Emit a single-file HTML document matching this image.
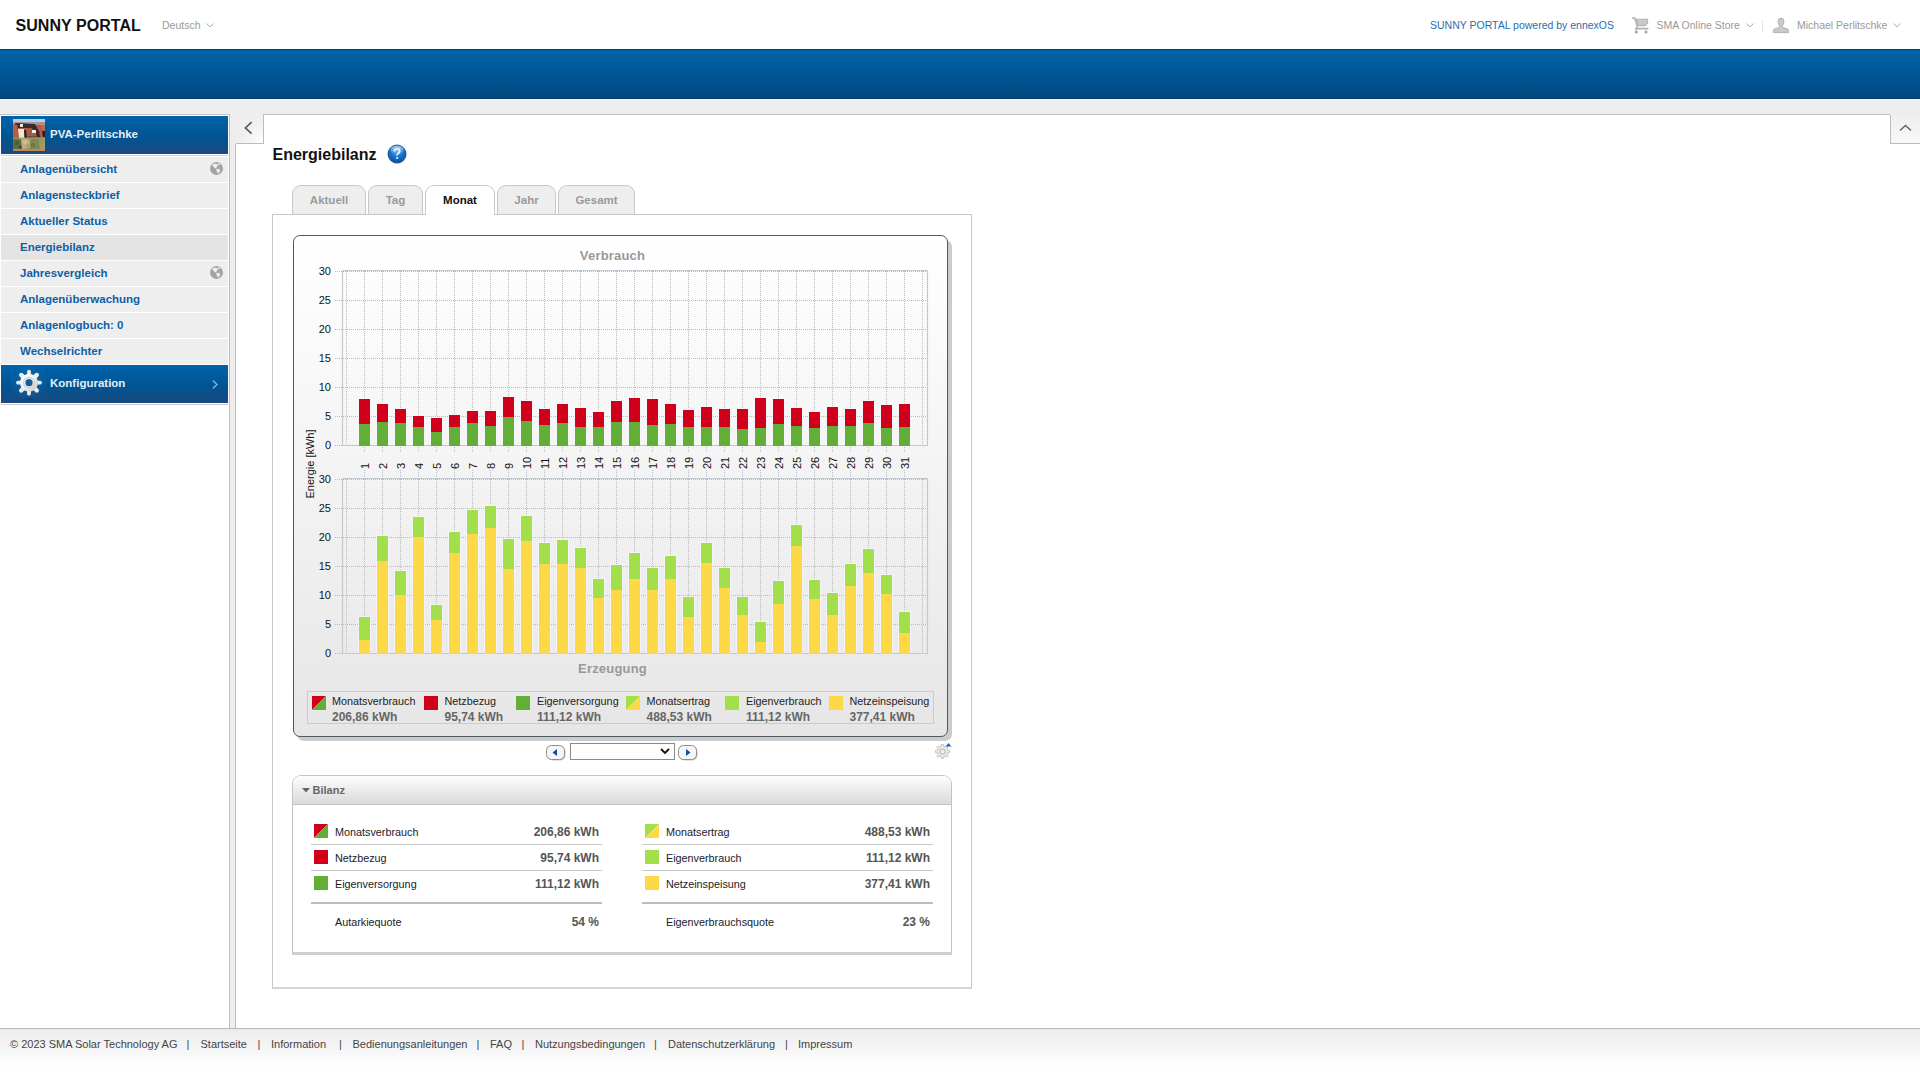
<!DOCTYPE html><html><head><meta charset="utf-8"><style>
html,body{margin:0;padding:0;width:1920px;height:1080px;overflow:hidden;background:#fff;font-family:"Liberation Sans", sans-serif;}
.t{position:absolute;white-space:nowrap;line-height:1;}
div{box-sizing:border-box;}
</style></head><body>
<div class="t" style="left:15.5px;top:18.46px;font-size:16px;color:#111;font-weight:bold;letter-spacing:0.05px;">SUNNY PORTAL</div>
<div class="t" style="left:162px;top:20.11px;font-size:10.5px;color:#999;font-weight:normal;">Deutsch</div>
<svg style="position:absolute;left:206px;top:23px" width="8" height="5" viewBox="0 0 8 5"><path d="M0.5 0.5 L4.0 4 L7.5 0.5" fill="none" stroke="#aaa" stroke-width="1"/></svg>
<div class="t" style="left:1430px;top:20.11px;font-size:10.5px;color:#1f6fb0;font-weight:normal;">SUNNY PORTAL powered by ennexOS</div>
<svg style="position:absolute;left:1628px;top:12px" width="26" height="24" viewBox="0 0 26 24">
<path d="M4 6 H6.8 L9.2 14.2 L8 18.3" fill="none" stroke="#b4b4b4" stroke-width="1.6" stroke-linejoin="round"/>
<path d="M8.2 7.3 H19.6 V11.2 L17.2 13.6 H10 Z" fill="#c9c9c9" stroke="#b4b4b4" stroke-width="1.1" stroke-linejoin="round"/>
<path d="M8 16.7 H19.6" stroke="#b0b0b0" stroke-width="1.8" stroke-linecap="round"/>
<circle cx="8.3" cy="20" r="1.6" fill="#a8a8a8"/><circle cx="18" cy="20" r="1.6" fill="#a8a8a8"/>
</svg>
<div class="t" style="left:1656.5px;top:20.11px;font-size:10.5px;color:#999;font-weight:normal;">SMA Online Store</div>
<svg style="position:absolute;left:1746px;top:23px" width="8" height="5" viewBox="0 0 8 5"><path d="M0.5 0.5 L4.0 4 L7.5 0.5" fill="none" stroke="#aaa" stroke-width="1"/></svg>
<div style="position:absolute;left:1762px;top:20px;width:1px;height:11px;border-left:1px dotted #ccc;"></div>
<svg style="position:absolute;left:1768px;top:12px" width="26" height="24" viewBox="0 0 26 24">
<path d="M5.4 20.6 V18.6 Q5.4 17.1 7.6 16.6 L10.2 15.8 Q11.6 15 11.9 14.1 Q10.2 12.6 10.2 10.2 V8.6 Q10.2 6.3 13 6.3 Q15.8 6.3 15.8 8.6 V10.2 Q15.8 12.6 14.1 14.1 Q14.4 15 15.8 15.8 L18.4 16.6 Q20.6 17.1 20.6 18.6 V20.6 Z" fill="#c9c9c9" stroke="#b2b2b2" stroke-width="1"/>
</svg>
<div class="t" style="left:1797px;top:20.11px;font-size:10.5px;color:#999;font-weight:normal;">Michael Perlitschke</div>
<svg style="position:absolute;left:1893px;top:23px" width="8" height="5" viewBox="0 0 8 5"><path d="M0.5 0.5 L4.0 4 L7.5 0.5" fill="none" stroke="#aaa" stroke-width="1"/></svg>
<div style="position:absolute;left:0px;top:49px;width:1920px;height:50px;background:linear-gradient(#0063aa,#00497f);"></div>
<div style="position:absolute;left:0px;top:49px;width:1920px;height:1px;background:#0a3d68;"></div>
<div style="position:absolute;left:0px;top:98px;width:1920px;height:1px;background:#023a68;"></div>
<div style="position:absolute;left:0px;top:99px;width:1920px;height:929px;background:#eeeeee;"></div>
<div style="position:absolute;left:0px;top:99px;width:1920px;height:1px;background:#f6f6f6;"></div>
<div style="position:absolute;left:0px;top:114px;width:230px;height:914px;background:#fff;border-top:1px solid #c4c4c4;border-right:1px solid #bdbdbd;"></div>
<div style="position:absolute;left:1px;top:116px;width:227px;height:38px;background:linear-gradient(#0063aa 0%,#005494 55%,#1b4a7e 100%);"></div>
<div style="position:absolute;left:1px;top:155px;width:227px;height:1px;background:#cfcfcf;"></div>
<svg style="position:absolute;left:13px;top:119px" width="32" height="32" viewBox="0 0 32 32">
<defs><filter id="pb" x="-10%" y="-10%" width="120%" height="120%"><feGaussianBlur stdDeviation="0.55"/></filter>
<clipPath id="pc"><rect width="32" height="32"/></clipPath></defs>
<g clip-path="url(#pc)"><g filter="url(#pb)">
<rect x="-2" y="-2" width="36" height="36" fill="#ad6048"/>
<rect x="-2" y="-2" width="36" height="5.5" fill="#a9d3ee"/>
<path d="M-2 3.5 L34 4.5 L34 6 L-2 5Z" fill="#c89a80"/>
<path d="M28 6 L34 6 L34 20 L30 20Z" fill="#b86a4c"/>
<path d="M2 4 L4 4 L5 11 L3 11Z" fill="#5a2a22"/>
<path d="M4 4 L22 5 L27 14 L22 15 L18 9 L12 9 L5 9Z" fill="#3a2a2c"/>
<path d="M7 5 L10 5 L10 8 L7 8Z" fill="#e8e4e2"/>
<path d="M14 7 L16 7 L16 9 L14 9Z" fill="#2c3550"/>
<path d="M5 10 L11 10 L11 19 L6 19Z" fill="#ebe5dc"/>
<path d="M11 11 L13 11 L14 19 L12 20Z" fill="#2a1c22"/>
<path d="M13 10 L18 9 L27 17 L24 19 L15 19Z" fill="#a95a40"/>
<path d="M19 11 L23 11 L23 14 L19 14Z" fill="#f2ece6"/>
<path d="M23 14 L26 14 L28 19 L24 19Z" fill="#3b2a2a"/>
<path d="M29 12 L32 12 L33 19 L30 19Z" fill="#2f1e1e"/>
<path d="M0 6 L4 6 L6 20 L0 20Z" fill="#b8603e"/>
<path d="M15 17 L24 17 L25 19 L15 20Z" fill="#5d5048"/>
<path d="M-2 19 L34 18 L34 34 L-2 34Z" fill="#9c9262"/>
<path d="M-2 21 Q3 19 8 21 L10 30 L-2 31Z" fill="#5f6d40"/>
<path d="M8 20 Q13 18 17 21 L17 29 L9 30Z" fill="#bcae80"/>
<path d="M17 21 Q22 19 26 21 L27 30 L17 30Z" fill="#7f8850"/>
<path d="M26 21 L34 20 L34 30 L27 30Z" fill="#a49a68"/>
<circle cx="4" cy="24" r="2" fill="#4d5a34"/><circle cx="12" cy="23" r="2.2" fill="#d0c090"/><circle cx="20" cy="26" r="2" fill="#6a7444"/><circle cx="28" cy="23" r="2" fill="#8f9a60"/><circle cx="15" cy="27" r="1.8" fill="#a89870"/><circle cx="7" cy="28" r="1.6" fill="#3f4a2c"/>
<rect x="-2" y="30" width="36" height="5" fill="#b98a62"/>
</g></g></svg>
<div class="t" style="left:50px;top:129.27px;font-size:11.5px;color:#e4eef8;font-weight:bold;">PVA-Perlitschke</div>
<div style="position:absolute;left:1px;top:157px;width:227px;height:25px;background:#eeeeee;"></div>
<div class="t" style="left:20px;top:164.27px;font-size:11.5px;color:#0e5fa6;font-weight:bold;">Anlagenübersicht</div>
<svg style="position:absolute;left:210px;top:162px" width="13" height="13" viewBox="0 0 13 13">
<circle cx="6.5" cy="6.5" r="6.5" fill="#a4a4a4"/>
<path d="M2.3 2.6 Q5 1.2 7.8 2.4 L7.6 3.8 L5.6 6.4 L4.2 5.4 L2.6 3.8Z M7.6 1.2 L9.6 1.7 L10.2 3 L8.4 3.1Z M6.1 6.9 L8.8 6.8 L10.3 8.4 L8.3 11.8 L7.1 10.2Z" fill="#f0f0f0"/></svg>
<div style="position:absolute;left:1px;top:183px;width:227px;height:25px;background:#eeeeee;"></div>
<div class="t" style="left:20px;top:190.27px;font-size:11.5px;color:#0e5fa6;font-weight:bold;">Anlagensteckbrief</div>
<div style="position:absolute;left:1px;top:209px;width:227px;height:25px;background:#eeeeee;"></div>
<div class="t" style="left:20px;top:216.27px;font-size:11.5px;color:#0e5fa6;font-weight:bold;">Aktueller Status</div>
<div style="position:absolute;left:1px;top:235px;width:227px;height:25px;background:#e4e4e4;"></div>
<div class="t" style="left:20px;top:242.27px;font-size:11.5px;color:#0e5fa6;font-weight:bold;">Energiebilanz</div>
<div style="position:absolute;left:1px;top:261px;width:227px;height:25px;background:#eeeeee;"></div>
<div class="t" style="left:20px;top:268.27px;font-size:11.5px;color:#0e5fa6;font-weight:bold;">Jahresvergleich</div>
<svg style="position:absolute;left:210px;top:266px" width="13" height="13" viewBox="0 0 13 13">
<circle cx="6.5" cy="6.5" r="6.5" fill="#a4a4a4"/>
<path d="M2.3 2.6 Q5 1.2 7.8 2.4 L7.6 3.8 L5.6 6.4 L4.2 5.4 L2.6 3.8Z M7.6 1.2 L9.6 1.7 L10.2 3 L8.4 3.1Z M6.1 6.9 L8.8 6.8 L10.3 8.4 L8.3 11.8 L7.1 10.2Z" fill="#f0f0f0"/></svg>
<div style="position:absolute;left:1px;top:287px;width:227px;height:25px;background:#eeeeee;"></div>
<div class="t" style="left:20px;top:294.27px;font-size:11.5px;color:#0e5fa6;font-weight:bold;">Anlagenüberwachung</div>
<div style="position:absolute;left:1px;top:313px;width:227px;height:25px;background:#eeeeee;"></div>
<div class="t" style="left:20px;top:320.27px;font-size:11.5px;color:#0e5fa6;font-weight:bold;">Anlagenlogbuch: 0</div>
<div style="position:absolute;left:1px;top:339px;width:227px;height:25px;background:#eeeeee;"></div>
<div class="t" style="left:20px;top:346.27px;font-size:11.5px;color:#0e5fa6;font-weight:bold;">Wechselrichter</div>
<div style="position:absolute;left:1px;top:365px;width:227px;height:38px;background:linear-gradient(#0063aa 0%,#005494 55%,#1b4a7e 100%);"></div>
<div style="position:absolute;left:1px;top:404px;width:227px;height:1px;background:#cccccc;"></div>
<svg style="position:absolute;left:8px;top:365px" width="42" height="38" viewBox="0 0 42 38">
<defs><radialGradient id="gl" cx="50%" cy="50%" r="50%"><stop offset="0" stop-color="#3a8ad0" stop-opacity="0.35"/><stop offset="1" stop-color="#3a8ad0" stop-opacity="0"/></radialGradient>
<radialGradient id="gsh" cx="50%" cy="50%" r="50%"><stop offset="0" stop-color="#0a2a50" stop-opacity="0.55"/><stop offset="1" stop-color="#0a2a50" stop-opacity="0"/></radialGradient>
<linearGradient id="gm" x1="0" y1="0" x2="1" y2="1"><stop offset="0" stop-color="#ffffff"/><stop offset="0.5" stop-color="#f0f0f0"/><stop offset="1" stop-color="#c4c4c4"/></linearGradient></defs>
<ellipse cx="21" cy="18" rx="20" ry="17" fill="url(#gl)"/>
<ellipse cx="21" cy="34" rx="7" ry="1.6" fill="url(#gsh)"/>
<g transform="translate(21 17.7)">
<g stroke="url(#gm)" stroke-width="4.2" stroke-linecap="round"><line x1="0" y1="0" x2="0.00" y2="-11.00"/><line x1="0" y1="0" x2="7.78" y2="-7.78"/><line x1="0" y1="0" x2="11.00" y2="0.00"/><line x1="0" y1="0" x2="7.78" y2="7.78"/><line x1="0" y1="0" x2="0.00" y2="11.00"/><line x1="0" y1="0" x2="-7.78" y2="7.78"/><line x1="0" y1="0" x2="-11.00" y2="0.00"/><line x1="0" y1="0" x2="-7.78" y2="-7.78"/></g>
<g stroke="#ececec" stroke-width="3.8" stroke-linecap="round"><line x1="0" y1="0" x2="0.00" y2="-11.00"/><line x1="0" y1="0" x2="7.78" y2="-7.78"/><line x1="0" y1="0" x2="11.00" y2="0.00"/><line x1="0" y1="0" x2="7.78" y2="7.78"/><line x1="0" y1="0" x2="0.00" y2="11.00"/><line x1="0" y1="0" x2="-7.78" y2="7.78"/><line x1="0" y1="0" x2="-11.00" y2="0.00"/><line x1="0" y1="0" x2="-7.78" y2="-7.78"/></g>
<circle r="9" fill="url(#gm)"/>
<circle r="5.4" fill="none" stroke="#d0d0d0" stroke-width="1.2"/>
<circle r="3.6" fill="#14609f"/>
</g></svg>
<div class="t" style="left:50px;top:378.27px;font-size:11.5px;color:#e4eef8;font-weight:bold;">Konfiguration</div>
<svg style="position:absolute;left:212px;top:380px" width="6" height="9" viewBox="0 0 6 9"><path d="M0.8 0.5 L5 4.5 L0.8 8.5" fill="none" stroke="#8fb4d8" stroke-width="1.3"/></svg>
<div style="position:absolute;left:235px;top:114px;width:1685px;height:914px;background:#fff;border-left:1px solid #bdbdbd;border-top:1px solid #bdbdbd;"></div>
<div style="position:absolute;left:235px;top:114px;width:29px;height:30px;background:#eeeeee;"></div>
<div style="position:absolute;left:236px;top:114px;width:28px;height:30px;background:radial-gradient(circle at 100% 100%, #fdfdfd 0%, #efefef 60%);border-right:1px solid #bdbdbd;border-bottom:1px solid #bdbdbd;"></div>
<svg style="position:absolute;left:244px;top:121px" width="9" height="14" viewBox="0 0 9 14"><path d="M7.6 1.1 L1.4 7 L7.6 12.7" fill="none" stroke="#5e5e5e" stroke-width="1.7"/></svg>
<div style="position:absolute;left:1890px;top:114px;width:30px;height:30px;background:#eeeeee;"></div>
<div style="position:absolute;left:1890px;top:115px;width:30px;height:29px;background:linear-gradient(#eeeeee,#f8f8f8);border-left:1px solid #bdbdbd;border-bottom:1px solid #bdbdbd;"></div>
<svg style="position:absolute;left:1899px;top:124px" width="13" height="8" viewBox="0 0 13 8"><path d="M1 6.5 L6.5 1.5 L12 6.5" fill="none" stroke="#666" stroke-width="1.6"/></svg>
<div class="t" style="left:272.5px;top:147.46px;font-size:16px;color:#111;font-weight:bold;">Energiebilanz</div>
<svg style="position:absolute;left:386px;top:143px" width="22" height="22" viewBox="0 0 22 22">
<defs><radialGradient id="hg" cx="50%" cy="30%" r="70%"><stop offset="0" stop-color="#5aaef0"/><stop offset="0.55" stop-color="#1a73c8"/><stop offset="1" stop-color="#0a4a98"/></radialGradient>
<linearGradient id="hl" x1="0" y1="0" x2="0" y2="1"><stop offset="0" stop-color="#fff" stop-opacity="0.55"/><stop offset="1" stop-color="#fff" stop-opacity="0"/></linearGradient></defs>
<ellipse cx="11.5" cy="12.2" rx="9" ry="9" fill="#000" opacity="0.12"/>
<circle cx="11" cy="11" r="9" fill="url(#hg)" stroke="#0d4f9a" stroke-width="0.9"/>
<ellipse cx="11" cy="7" rx="6.5" ry="4.2" fill="url(#hl)"/>
<path d="M8.3 8.6 Q8.3 5.8 11 5.8 Q13.7 5.8 13.7 8.2 Q13.7 9.6 12 10.5 Q11.1 11 11.1 12.4" fill="none" stroke="#f0f6ff" stroke-width="1.6"/>
<circle cx="11.1" cy="15" r="1.1" fill="#f0f6ff"/></svg>
<div style="position:absolute;left:272px;top:214px;width:700px;height:775px;background:#fff;border:1px solid #c8c8c8;border-bottom:2px solid #d4d4d4;"></div>
<div style="position:absolute;left:292px;top:185px;width:74px;height:29px;background:#eeeeee;border:1px solid #c8c8c8;border-bottom:none;border-radius:9px 9px 0 0;"></div>
<div class="t" style="left:129.0px;width:400px;text-align:center;top:194.77px;font-size:11.5px;color:#9a9a9a;font-weight:bold;">Aktuell</div>
<div style="position:absolute;left:368px;top:185px;width:55px;height:29px;background:#eeeeee;border:1px solid #c8c8c8;border-bottom:none;border-radius:9px 9px 0 0;"></div>
<div class="t" style="left:195.5px;width:400px;text-align:center;top:194.77px;font-size:11.5px;color:#9a9a9a;font-weight:bold;">Tag</div>
<div style="position:absolute;left:425px;top:185px;width:70px;height:30px;background:#fff;border:1px solid #c8c8c8;border-bottom:none;border-radius:9px 9px 0 0;"></div>
<div class="t" style="left:260.0px;width:400px;text-align:center;top:194.77px;font-size:11.5px;color:#111;font-weight:bold;">Monat</div>
<div style="position:absolute;left:497px;top:185px;width:59px;height:29px;background:#eeeeee;border:1px solid #c8c8c8;border-bottom:none;border-radius:9px 9px 0 0;"></div>
<div class="t" style="left:326.5px;width:400px;text-align:center;top:194.77px;font-size:11.5px;color:#9a9a9a;font-weight:bold;">Jahr</div>
<div style="position:absolute;left:558px;top:185px;width:77px;height:29px;background:#eeeeee;border:1px solid #c8c8c8;border-bottom:none;border-radius:9px 9px 0 0;"></div>
<div class="t" style="left:396.5px;width:400px;text-align:center;top:194.77px;font-size:11.5px;color:#9a9a9a;font-weight:bold;">Gesamt</div>
<div style="position:absolute;left:297px;top:240px;width:655px;height:501px;background:#cbcbcb;border-radius:7px;"></div>
<div style="position:absolute;left:293px;top:235px;width:655px;height:502px;background:linear-gradient(#ffffff 0%,#f4f4f4 45%,#e6e6e6 100%);border:1.5px solid #4e5963;border-radius:7px;"></div>
<div class="t" style="left:412.5px;width:400px;text-align:center;top:249.00px;font-size:13px;color:#999;font-weight:bold;letter-spacing:0.2px;">Verbrauch</div>
<div class="t" style="left:412.5px;width:400px;text-align:center;top:662.00px;font-size:13px;color:#999;font-weight:bold;letter-spacing:0.2px;">Erzeugung</div>
<svg style="position:absolute;left:0;top:0" width="1920" height="1080" viewBox="0 0 1920 1080">
<line x1="335" y1="445.5" x2="927" y2="445.5" stroke="#b4bcc4" stroke-width="1" stroke-dasharray="1 1"/>
<line x1="335" y1="416.5" x2="927" y2="416.5" stroke="#b4bcc4" stroke-width="1" stroke-dasharray="1 1"/>
<line x1="335" y1="387.5" x2="927" y2="387.5" stroke="#b4bcc4" stroke-width="1" stroke-dasharray="1 1"/>
<line x1="335" y1="358.5" x2="927" y2="358.5" stroke="#b4bcc4" stroke-width="1" stroke-dasharray="1 1"/>
<line x1="335" y1="329.5" x2="927" y2="329.5" stroke="#b4bcc4" stroke-width="1" stroke-dasharray="1 1"/>
<line x1="335" y1="300.5" x2="927" y2="300.5" stroke="#b4bcc4" stroke-width="1" stroke-dasharray="1 1"/>
<line x1="335" y1="271.5" x2="927" y2="271.5" stroke="#b4bcc4" stroke-width="1" stroke-dasharray="1 1"/>
<line x1="346.5" y1="271" x2="346.5" y2="445" stroke="#b4bcc4" stroke-width="1" stroke-dasharray="1 1"/>
<line x1="364.5" y1="271" x2="364.5" y2="445" stroke="#b4bcc4" stroke-width="1" stroke-dasharray="1 1"/>
<line x1="382.5" y1="271" x2="382.5" y2="445" stroke="#b4bcc4" stroke-width="1" stroke-dasharray="1 1"/>
<line x1="400.5" y1="271" x2="400.5" y2="445" stroke="#b4bcc4" stroke-width="1" stroke-dasharray="1 1"/>
<line x1="418.5" y1="271" x2="418.5" y2="445" stroke="#b4bcc4" stroke-width="1" stroke-dasharray="1 1"/>
<line x1="436.5" y1="271" x2="436.5" y2="445" stroke="#b4bcc4" stroke-width="1" stroke-dasharray="1 1"/>
<line x1="454.5" y1="271" x2="454.5" y2="445" stroke="#b4bcc4" stroke-width="1" stroke-dasharray="1 1"/>
<line x1="472.5" y1="271" x2="472.5" y2="445" stroke="#b4bcc4" stroke-width="1" stroke-dasharray="1 1"/>
<line x1="490.5" y1="271" x2="490.5" y2="445" stroke="#b4bcc4" stroke-width="1" stroke-dasharray="1 1"/>
<line x1="508.5" y1="271" x2="508.5" y2="445" stroke="#b4bcc4" stroke-width="1" stroke-dasharray="1 1"/>
<line x1="526.5" y1="271" x2="526.5" y2="445" stroke="#b4bcc4" stroke-width="1" stroke-dasharray="1 1"/>
<line x1="544.5" y1="271" x2="544.5" y2="445" stroke="#b4bcc4" stroke-width="1" stroke-dasharray="1 1"/>
<line x1="562.5" y1="271" x2="562.5" y2="445" stroke="#b4bcc4" stroke-width="1" stroke-dasharray="1 1"/>
<line x1="580.5" y1="271" x2="580.5" y2="445" stroke="#b4bcc4" stroke-width="1" stroke-dasharray="1 1"/>
<line x1="598.5" y1="271" x2="598.5" y2="445" stroke="#b4bcc4" stroke-width="1" stroke-dasharray="1 1"/>
<line x1="616.5" y1="271" x2="616.5" y2="445" stroke="#b4bcc4" stroke-width="1" stroke-dasharray="1 1"/>
<line x1="634.5" y1="271" x2="634.5" y2="445" stroke="#b4bcc4" stroke-width="1" stroke-dasharray="1 1"/>
<line x1="652.5" y1="271" x2="652.5" y2="445" stroke="#b4bcc4" stroke-width="1" stroke-dasharray="1 1"/>
<line x1="670.5" y1="271" x2="670.5" y2="445" stroke="#b4bcc4" stroke-width="1" stroke-dasharray="1 1"/>
<line x1="688.5" y1="271" x2="688.5" y2="445" stroke="#b4bcc4" stroke-width="1" stroke-dasharray="1 1"/>
<line x1="706.5" y1="271" x2="706.5" y2="445" stroke="#b4bcc4" stroke-width="1" stroke-dasharray="1 1"/>
<line x1="724.5" y1="271" x2="724.5" y2="445" stroke="#b4bcc4" stroke-width="1" stroke-dasharray="1 1"/>
<line x1="742.5" y1="271" x2="742.5" y2="445" stroke="#b4bcc4" stroke-width="1" stroke-dasharray="1 1"/>
<line x1="760.5" y1="271" x2="760.5" y2="445" stroke="#b4bcc4" stroke-width="1" stroke-dasharray="1 1"/>
<line x1="778.5" y1="271" x2="778.5" y2="445" stroke="#b4bcc4" stroke-width="1" stroke-dasharray="1 1"/>
<line x1="796.5" y1="271" x2="796.5" y2="445" stroke="#b4bcc4" stroke-width="1" stroke-dasharray="1 1"/>
<line x1="814.5" y1="271" x2="814.5" y2="445" stroke="#b4bcc4" stroke-width="1" stroke-dasharray="1 1"/>
<line x1="832.5" y1="271" x2="832.5" y2="445" stroke="#b4bcc4" stroke-width="1" stroke-dasharray="1 1"/>
<line x1="850.5" y1="271" x2="850.5" y2="445" stroke="#b4bcc4" stroke-width="1" stroke-dasharray="1 1"/>
<line x1="868.5" y1="271" x2="868.5" y2="445" stroke="#b4bcc4" stroke-width="1" stroke-dasharray="1 1"/>
<line x1="886.5" y1="271" x2="886.5" y2="445" stroke="#b4bcc4" stroke-width="1" stroke-dasharray="1 1"/>
<line x1="904.5" y1="271" x2="904.5" y2="445" stroke="#b4bcc4" stroke-width="1" stroke-dasharray="1 1"/>
<line x1="922.5" y1="271" x2="922.5" y2="445" stroke="#b4bcc4" stroke-width="1" stroke-dasharray="1 1"/>
<rect x="358.0" y="398" width="13" height="47" fill="#f6f6ff" opacity="0.6"/>
<rect x="376.0" y="403" width="13" height="42" fill="#f6f6ff" opacity="0.6"/>
<rect x="394.0" y="408" width="13" height="37" fill="#f6f6ff" opacity="0.6"/>
<rect x="412.0" y="415" width="13" height="30" fill="#f6f6ff" opacity="0.6"/>
<rect x="430.0" y="417" width="13" height="28" fill="#f6f6ff" opacity="0.6"/>
<rect x="448.0" y="414" width="13" height="31" fill="#f6f6ff" opacity="0.6"/>
<rect x="466.0" y="410" width="13" height="35" fill="#f6f6ff" opacity="0.6"/>
<rect x="484.0" y="410" width="13" height="35" fill="#f6f6ff" opacity="0.6"/>
<rect x="502.0" y="396" width="13" height="49" fill="#f6f6ff" opacity="0.6"/>
<rect x="520.0" y="400" width="13" height="45" fill="#f6f6ff" opacity="0.6"/>
<rect x="538.0" y="408" width="13" height="37" fill="#f6f6ff" opacity="0.6"/>
<rect x="556.0" y="403" width="13" height="42" fill="#f6f6ff" opacity="0.6"/>
<rect x="574.0" y="407" width="13" height="38" fill="#f6f6ff" opacity="0.6"/>
<rect x="592.0" y="411" width="13" height="34" fill="#f6f6ff" opacity="0.6"/>
<rect x="610.0" y="400" width="13" height="45" fill="#f6f6ff" opacity="0.6"/>
<rect x="628.0" y="397" width="13" height="48" fill="#f6f6ff" opacity="0.6"/>
<rect x="646.0" y="398" width="13" height="47" fill="#f6f6ff" opacity="0.6"/>
<rect x="664.0" y="403" width="13" height="42" fill="#f6f6ff" opacity="0.6"/>
<rect x="682.0" y="409" width="13" height="36" fill="#f6f6ff" opacity="0.6"/>
<rect x="700.0" y="406" width="13" height="39" fill="#f6f6ff" opacity="0.6"/>
<rect x="718.0" y="408" width="13" height="37" fill="#f6f6ff" opacity="0.6"/>
<rect x="736.0" y="408" width="13" height="37" fill="#f6f6ff" opacity="0.6"/>
<rect x="754.0" y="397" width="13" height="48" fill="#f6f6ff" opacity="0.6"/>
<rect x="772.0" y="398" width="13" height="47" fill="#f6f6ff" opacity="0.6"/>
<rect x="790.0" y="407" width="13" height="38" fill="#f6f6ff" opacity="0.6"/>
<rect x="808.0" y="411" width="13" height="34" fill="#f6f6ff" opacity="0.6"/>
<rect x="826.0" y="406" width="13" height="39" fill="#f6f6ff" opacity="0.6"/>
<rect x="844.0" y="408" width="13" height="37" fill="#f6f6ff" opacity="0.6"/>
<rect x="862.0" y="400" width="13" height="45" fill="#f6f6ff" opacity="0.6"/>
<rect x="880.0" y="404" width="13" height="41" fill="#f6f6ff" opacity="0.6"/>
<rect x="898.0" y="403" width="13" height="42" fill="#f6f6ff" opacity="0.6"/>
<path d="M342.5 270.5 H927.5 V445.5 H342.5 Z" fill="none" stroke="#c2c9d0" stroke-width="1.2"/>
<rect x="359.0" y="399" width="11" height="25" fill="#d1001a"/>
<rect x="359.0" y="424" width="11" height="22" fill="#63ae37"/>
<rect x="377.0" y="404" width="11" height="18" fill="#d1001a"/>
<rect x="377.0" y="422" width="11" height="24" fill="#63ae37"/>
<rect x="395.0" y="409" width="11" height="14" fill="#d1001a"/>
<rect x="395.0" y="423" width="11" height="23" fill="#63ae37"/>
<rect x="413.0" y="416" width="11" height="11" fill="#d1001a"/>
<rect x="413.0" y="427" width="11" height="19" fill="#63ae37"/>
<rect x="431.0" y="418" width="11" height="14" fill="#d1001a"/>
<rect x="431.0" y="432" width="11" height="14" fill="#63ae37"/>
<rect x="449.0" y="415" width="11" height="12" fill="#d1001a"/>
<rect x="449.0" y="427" width="11" height="19" fill="#63ae37"/>
<rect x="467.0" y="411" width="11" height="12" fill="#d1001a"/>
<rect x="467.0" y="423" width="11" height="23" fill="#63ae37"/>
<rect x="485.0" y="411" width="11" height="15" fill="#d1001a"/>
<rect x="485.0" y="426" width="11" height="20" fill="#63ae37"/>
<rect x="503.0" y="397" width="11" height="20" fill="#d1001a"/>
<rect x="503.0" y="417" width="11" height="29" fill="#63ae37"/>
<rect x="521.0" y="401" width="11" height="20" fill="#d1001a"/>
<rect x="521.0" y="421" width="11" height="25" fill="#63ae37"/>
<rect x="539.0" y="409" width="11" height="16" fill="#d1001a"/>
<rect x="539.0" y="425" width="11" height="21" fill="#63ae37"/>
<rect x="557.0" y="404" width="11" height="19" fill="#d1001a"/>
<rect x="557.0" y="423" width="11" height="23" fill="#63ae37"/>
<rect x="575.0" y="408" width="11" height="19" fill="#d1001a"/>
<rect x="575.0" y="427" width="11" height="19" fill="#63ae37"/>
<rect x="593.0" y="412" width="11" height="15" fill="#d1001a"/>
<rect x="593.0" y="427" width="11" height="19" fill="#63ae37"/>
<rect x="611.0" y="401" width="11" height="21" fill="#d1001a"/>
<rect x="611.0" y="422" width="11" height="24" fill="#63ae37"/>
<rect x="629.0" y="398" width="11" height="24" fill="#d1001a"/>
<rect x="629.0" y="422" width="11" height="24" fill="#63ae37"/>
<rect x="647.0" y="399" width="11" height="26" fill="#d1001a"/>
<rect x="647.0" y="425" width="11" height="21" fill="#63ae37"/>
<rect x="665.0" y="404" width="11" height="20" fill="#d1001a"/>
<rect x="665.0" y="424" width="11" height="22" fill="#63ae37"/>
<rect x="683.0" y="410" width="11" height="17" fill="#d1001a"/>
<rect x="683.0" y="427" width="11" height="19" fill="#63ae37"/>
<rect x="701.0" y="407" width="11" height="20" fill="#d1001a"/>
<rect x="701.0" y="427" width="11" height="19" fill="#63ae37"/>
<rect x="719.0" y="409" width="11" height="18" fill="#d1001a"/>
<rect x="719.0" y="427" width="11" height="19" fill="#63ae37"/>
<rect x="737.0" y="409" width="11" height="20" fill="#d1001a"/>
<rect x="737.0" y="429" width="11" height="17" fill="#63ae37"/>
<rect x="755.0" y="398" width="11" height="30" fill="#d1001a"/>
<rect x="755.0" y="428" width="11" height="18" fill="#63ae37"/>
<rect x="773.0" y="399" width="11" height="25" fill="#d1001a"/>
<rect x="773.0" y="424" width="11" height="22" fill="#63ae37"/>
<rect x="791.0" y="408" width="11" height="18" fill="#d1001a"/>
<rect x="791.0" y="426" width="11" height="20" fill="#63ae37"/>
<rect x="809.0" y="412" width="11" height="16" fill="#d1001a"/>
<rect x="809.0" y="428" width="11" height="18" fill="#63ae37"/>
<rect x="827.0" y="407" width="11" height="19" fill="#d1001a"/>
<rect x="827.0" y="426" width="11" height="20" fill="#63ae37"/>
<rect x="845.0" y="409" width="11" height="17" fill="#d1001a"/>
<rect x="845.0" y="426" width="11" height="20" fill="#63ae37"/>
<rect x="863.0" y="401" width="11" height="22" fill="#d1001a"/>
<rect x="863.0" y="423" width="11" height="23" fill="#63ae37"/>
<rect x="881.0" y="405" width="11" height="23" fill="#d1001a"/>
<rect x="881.0" y="428" width="11" height="18" fill="#63ae37"/>
<rect x="899.0" y="404" width="11" height="23" fill="#d1001a"/>
<rect x="899.0" y="427" width="11" height="19" fill="#63ae37"/>
<line x1="335" y1="653.5" x2="927" y2="653.5" stroke="#b4bcc4" stroke-width="1" stroke-dasharray="1 1"/>
<line x1="335" y1="624.5" x2="927" y2="624.5" stroke="#b4bcc4" stroke-width="1" stroke-dasharray="1 1"/>
<line x1="335" y1="595.5" x2="927" y2="595.5" stroke="#b4bcc4" stroke-width="1" stroke-dasharray="1 1"/>
<line x1="335" y1="566.5" x2="927" y2="566.5" stroke="#b4bcc4" stroke-width="1" stroke-dasharray="1 1"/>
<line x1="335" y1="537.5" x2="927" y2="537.5" stroke="#b4bcc4" stroke-width="1" stroke-dasharray="1 1"/>
<line x1="335" y1="508.5" x2="927" y2="508.5" stroke="#b4bcc4" stroke-width="1" stroke-dasharray="1 1"/>
<line x1="335" y1="479.5" x2="927" y2="479.5" stroke="#b4bcc4" stroke-width="1" stroke-dasharray="1 1"/>
<line x1="346.5" y1="479" x2="346.5" y2="653" stroke="#b4bcc4" stroke-width="1" stroke-dasharray="1 1"/>
<line x1="364.5" y1="479" x2="364.5" y2="653" stroke="#b4bcc4" stroke-width="1" stroke-dasharray="1 1"/>
<line x1="382.5" y1="479" x2="382.5" y2="653" stroke="#b4bcc4" stroke-width="1" stroke-dasharray="1 1"/>
<line x1="400.5" y1="479" x2="400.5" y2="653" stroke="#b4bcc4" stroke-width="1" stroke-dasharray="1 1"/>
<line x1="418.5" y1="479" x2="418.5" y2="653" stroke="#b4bcc4" stroke-width="1" stroke-dasharray="1 1"/>
<line x1="436.5" y1="479" x2="436.5" y2="653" stroke="#b4bcc4" stroke-width="1" stroke-dasharray="1 1"/>
<line x1="454.5" y1="479" x2="454.5" y2="653" stroke="#b4bcc4" stroke-width="1" stroke-dasharray="1 1"/>
<line x1="472.5" y1="479" x2="472.5" y2="653" stroke="#b4bcc4" stroke-width="1" stroke-dasharray="1 1"/>
<line x1="490.5" y1="479" x2="490.5" y2="653" stroke="#b4bcc4" stroke-width="1" stroke-dasharray="1 1"/>
<line x1="508.5" y1="479" x2="508.5" y2="653" stroke="#b4bcc4" stroke-width="1" stroke-dasharray="1 1"/>
<line x1="526.5" y1="479" x2="526.5" y2="653" stroke="#b4bcc4" stroke-width="1" stroke-dasharray="1 1"/>
<line x1="544.5" y1="479" x2="544.5" y2="653" stroke="#b4bcc4" stroke-width="1" stroke-dasharray="1 1"/>
<line x1="562.5" y1="479" x2="562.5" y2="653" stroke="#b4bcc4" stroke-width="1" stroke-dasharray="1 1"/>
<line x1="580.5" y1="479" x2="580.5" y2="653" stroke="#b4bcc4" stroke-width="1" stroke-dasharray="1 1"/>
<line x1="598.5" y1="479" x2="598.5" y2="653" stroke="#b4bcc4" stroke-width="1" stroke-dasharray="1 1"/>
<line x1="616.5" y1="479" x2="616.5" y2="653" stroke="#b4bcc4" stroke-width="1" stroke-dasharray="1 1"/>
<line x1="634.5" y1="479" x2="634.5" y2="653" stroke="#b4bcc4" stroke-width="1" stroke-dasharray="1 1"/>
<line x1="652.5" y1="479" x2="652.5" y2="653" stroke="#b4bcc4" stroke-width="1" stroke-dasharray="1 1"/>
<line x1="670.5" y1="479" x2="670.5" y2="653" stroke="#b4bcc4" stroke-width="1" stroke-dasharray="1 1"/>
<line x1="688.5" y1="479" x2="688.5" y2="653" stroke="#b4bcc4" stroke-width="1" stroke-dasharray="1 1"/>
<line x1="706.5" y1="479" x2="706.5" y2="653" stroke="#b4bcc4" stroke-width="1" stroke-dasharray="1 1"/>
<line x1="724.5" y1="479" x2="724.5" y2="653" stroke="#b4bcc4" stroke-width="1" stroke-dasharray="1 1"/>
<line x1="742.5" y1="479" x2="742.5" y2="653" stroke="#b4bcc4" stroke-width="1" stroke-dasharray="1 1"/>
<line x1="760.5" y1="479" x2="760.5" y2="653" stroke="#b4bcc4" stroke-width="1" stroke-dasharray="1 1"/>
<line x1="778.5" y1="479" x2="778.5" y2="653" stroke="#b4bcc4" stroke-width="1" stroke-dasharray="1 1"/>
<line x1="796.5" y1="479" x2="796.5" y2="653" stroke="#b4bcc4" stroke-width="1" stroke-dasharray="1 1"/>
<line x1="814.5" y1="479" x2="814.5" y2="653" stroke="#b4bcc4" stroke-width="1" stroke-dasharray="1 1"/>
<line x1="832.5" y1="479" x2="832.5" y2="653" stroke="#b4bcc4" stroke-width="1" stroke-dasharray="1 1"/>
<line x1="850.5" y1="479" x2="850.5" y2="653" stroke="#b4bcc4" stroke-width="1" stroke-dasharray="1 1"/>
<line x1="868.5" y1="479" x2="868.5" y2="653" stroke="#b4bcc4" stroke-width="1" stroke-dasharray="1 1"/>
<line x1="886.5" y1="479" x2="886.5" y2="653" stroke="#b4bcc4" stroke-width="1" stroke-dasharray="1 1"/>
<line x1="904.5" y1="479" x2="904.5" y2="653" stroke="#b4bcc4" stroke-width="1" stroke-dasharray="1 1"/>
<line x1="922.5" y1="479" x2="922.5" y2="653" stroke="#b4bcc4" stroke-width="1" stroke-dasharray="1 1"/>
<rect x="358.0" y="616" width="13" height="37" fill="#f6f6ff" opacity="0.6"/>
<rect x="376.0" y="535" width="13" height="118" fill="#f6f6ff" opacity="0.6"/>
<rect x="394.0" y="570" width="13" height="83" fill="#f6f6ff" opacity="0.6"/>
<rect x="412.0" y="516" width="13" height="137" fill="#f6f6ff" opacity="0.6"/>
<rect x="430.0" y="604" width="13" height="49" fill="#f6f6ff" opacity="0.6"/>
<rect x="448.0" y="531" width="13" height="122" fill="#f6f6ff" opacity="0.6"/>
<rect x="466.0" y="509" width="13" height="144" fill="#f6f6ff" opacity="0.6"/>
<rect x="484.0" y="505" width="13" height="148" fill="#f6f6ff" opacity="0.6"/>
<rect x="502.0" y="538" width="13" height="115" fill="#f6f6ff" opacity="0.6"/>
<rect x="520.0" y="515" width="13" height="138" fill="#f6f6ff" opacity="0.6"/>
<rect x="538.0" y="542" width="13" height="111" fill="#f6f6ff" opacity="0.6"/>
<rect x="556.0" y="539" width="13" height="114" fill="#f6f6ff" opacity="0.6"/>
<rect x="574.0" y="547" width="13" height="106" fill="#f6f6ff" opacity="0.6"/>
<rect x="592.0" y="578" width="13" height="75" fill="#f6f6ff" opacity="0.6"/>
<rect x="610.0" y="564" width="13" height="89" fill="#f6f6ff" opacity="0.6"/>
<rect x="628.0" y="552" width="13" height="101" fill="#f6f6ff" opacity="0.6"/>
<rect x="646.0" y="567" width="13" height="86" fill="#f6f6ff" opacity="0.6"/>
<rect x="664.0" y="555" width="13" height="98" fill="#f6f6ff" opacity="0.6"/>
<rect x="682.0" y="596" width="13" height="57" fill="#f6f6ff" opacity="0.6"/>
<rect x="700.0" y="542" width="13" height="111" fill="#f6f6ff" opacity="0.6"/>
<rect x="718.0" y="567" width="13" height="86" fill="#f6f6ff" opacity="0.6"/>
<rect x="736.0" y="596" width="13" height="57" fill="#f6f6ff" opacity="0.6"/>
<rect x="754.0" y="621" width="13" height="32" fill="#f6f6ff" opacity="0.6"/>
<rect x="772.0" y="580" width="13" height="73" fill="#f6f6ff" opacity="0.6"/>
<rect x="790.0" y="524" width="13" height="129" fill="#f6f6ff" opacity="0.6"/>
<rect x="808.0" y="579" width="13" height="74" fill="#f6f6ff" opacity="0.6"/>
<rect x="826.0" y="592" width="13" height="61" fill="#f6f6ff" opacity="0.6"/>
<rect x="844.0" y="563" width="13" height="90" fill="#f6f6ff" opacity="0.6"/>
<rect x="862.0" y="548" width="13" height="105" fill="#f6f6ff" opacity="0.6"/>
<rect x="880.0" y="574" width="13" height="79" fill="#f6f6ff" opacity="0.6"/>
<rect x="898.0" y="611" width="13" height="42" fill="#f6f6ff" opacity="0.6"/>
<path d="M342.5 478.5 H927.5 V653.5 H342.5 Z" fill="none" stroke="#c2c9d0" stroke-width="1.2"/>
<rect x="359.0" y="617" width="11" height="23" fill="#a2df4b"/>
<rect x="359.0" y="640" width="11" height="14" fill="#fdd948"/>
<rect x="377.0" y="536" width="11" height="25" fill="#a2df4b"/>
<rect x="377.0" y="561" width="11" height="93" fill="#fdd948"/>
<rect x="395.0" y="571" width="11" height="24" fill="#a2df4b"/>
<rect x="395.0" y="595" width="11" height="59" fill="#fdd948"/>
<rect x="413.0" y="517" width="11" height="20" fill="#a2df4b"/>
<rect x="413.0" y="537" width="11" height="117" fill="#fdd948"/>
<rect x="431.0" y="605" width="11" height="15" fill="#a2df4b"/>
<rect x="431.0" y="620" width="11" height="34" fill="#fdd948"/>
<rect x="449.0" y="532" width="11" height="21" fill="#a2df4b"/>
<rect x="449.0" y="553" width="11" height="101" fill="#fdd948"/>
<rect x="467.0" y="510" width="11" height="24" fill="#a2df4b"/>
<rect x="467.0" y="534" width="11" height="120" fill="#fdd948"/>
<rect x="485.0" y="506" width="11" height="22" fill="#a2df4b"/>
<rect x="485.0" y="528" width="11" height="126" fill="#fdd948"/>
<rect x="503.0" y="539" width="11" height="30" fill="#a2df4b"/>
<rect x="503.0" y="569" width="11" height="85" fill="#fdd948"/>
<rect x="521.0" y="516" width="11" height="25" fill="#a2df4b"/>
<rect x="521.0" y="541" width="11" height="113" fill="#fdd948"/>
<rect x="539.0" y="543" width="11" height="21" fill="#a2df4b"/>
<rect x="539.0" y="564" width="11" height="90" fill="#fdd948"/>
<rect x="557.0" y="540" width="11" height="24" fill="#a2df4b"/>
<rect x="557.0" y="564" width="11" height="90" fill="#fdd948"/>
<rect x="575.0" y="548" width="11" height="20" fill="#a2df4b"/>
<rect x="575.0" y="568" width="11" height="86" fill="#fdd948"/>
<rect x="593.0" y="579" width="11" height="19" fill="#a2df4b"/>
<rect x="593.0" y="598" width="11" height="56" fill="#fdd948"/>
<rect x="611.0" y="565" width="11" height="25" fill="#a2df4b"/>
<rect x="611.0" y="590" width="11" height="64" fill="#fdd948"/>
<rect x="629.0" y="553" width="11" height="26" fill="#a2df4b"/>
<rect x="629.0" y="579" width="11" height="75" fill="#fdd948"/>
<rect x="647.0" y="568" width="11" height="22" fill="#a2df4b"/>
<rect x="647.0" y="590" width="11" height="64" fill="#fdd948"/>
<rect x="665.0" y="556" width="11" height="23" fill="#a2df4b"/>
<rect x="665.0" y="579" width="11" height="75" fill="#fdd948"/>
<rect x="683.0" y="597" width="11" height="20" fill="#a2df4b"/>
<rect x="683.0" y="617" width="11" height="37" fill="#fdd948"/>
<rect x="701.0" y="543" width="11" height="20" fill="#a2df4b"/>
<rect x="701.0" y="563" width="11" height="91" fill="#fdd948"/>
<rect x="719.0" y="568" width="11" height="20" fill="#a2df4b"/>
<rect x="719.0" y="588" width="11" height="66" fill="#fdd948"/>
<rect x="737.0" y="597" width="11" height="18" fill="#a2df4b"/>
<rect x="737.0" y="615" width="11" height="39" fill="#fdd948"/>
<rect x="755.0" y="622" width="11" height="20" fill="#a2df4b"/>
<rect x="755.0" y="642" width="11" height="12" fill="#fdd948"/>
<rect x="773.0" y="581" width="11" height="23" fill="#a2df4b"/>
<rect x="773.0" y="604" width="11" height="50" fill="#fdd948"/>
<rect x="791.0" y="525" width="11" height="21" fill="#a2df4b"/>
<rect x="791.0" y="546" width="11" height="108" fill="#fdd948"/>
<rect x="809.0" y="580" width="11" height="19" fill="#a2df4b"/>
<rect x="809.0" y="599" width="11" height="55" fill="#fdd948"/>
<rect x="827.0" y="593" width="11" height="22" fill="#a2df4b"/>
<rect x="827.0" y="615" width="11" height="39" fill="#fdd948"/>
<rect x="845.0" y="564" width="11" height="22" fill="#a2df4b"/>
<rect x="845.0" y="586" width="11" height="68" fill="#fdd948"/>
<rect x="863.0" y="549" width="11" height="24" fill="#a2df4b"/>
<rect x="863.0" y="573" width="11" height="81" fill="#fdd948"/>
<rect x="881.0" y="575" width="11" height="19" fill="#a2df4b"/>
<rect x="881.0" y="594" width="11" height="60" fill="#fdd948"/>
<rect x="899.0" y="612" width="11" height="21" fill="#a2df4b"/>
<rect x="899.0" y="633" width="11" height="21" fill="#fdd948"/>
<line x1="364.5" y1="447" x2="364.5" y2="453" stroke="#b4bcc4" stroke-width="1" stroke-dasharray="1 1"/>
<line x1="364.5" y1="470" x2="364.5" y2="478" stroke="#b4bcc4" stroke-width="1" stroke-dasharray="1 1"/>
<line x1="382.5" y1="447" x2="382.5" y2="453" stroke="#b4bcc4" stroke-width="1" stroke-dasharray="1 1"/>
<line x1="382.5" y1="470" x2="382.5" y2="478" stroke="#b4bcc4" stroke-width="1" stroke-dasharray="1 1"/>
<line x1="400.5" y1="447" x2="400.5" y2="453" stroke="#b4bcc4" stroke-width="1" stroke-dasharray="1 1"/>
<line x1="400.5" y1="470" x2="400.5" y2="478" stroke="#b4bcc4" stroke-width="1" stroke-dasharray="1 1"/>
<line x1="418.5" y1="447" x2="418.5" y2="453" stroke="#b4bcc4" stroke-width="1" stroke-dasharray="1 1"/>
<line x1="418.5" y1="470" x2="418.5" y2="478" stroke="#b4bcc4" stroke-width="1" stroke-dasharray="1 1"/>
<line x1="436.5" y1="447" x2="436.5" y2="453" stroke="#b4bcc4" stroke-width="1" stroke-dasharray="1 1"/>
<line x1="436.5" y1="470" x2="436.5" y2="478" stroke="#b4bcc4" stroke-width="1" stroke-dasharray="1 1"/>
<line x1="454.5" y1="447" x2="454.5" y2="453" stroke="#b4bcc4" stroke-width="1" stroke-dasharray="1 1"/>
<line x1="454.5" y1="470" x2="454.5" y2="478" stroke="#b4bcc4" stroke-width="1" stroke-dasharray="1 1"/>
<line x1="472.5" y1="447" x2="472.5" y2="453" stroke="#b4bcc4" stroke-width="1" stroke-dasharray="1 1"/>
<line x1="472.5" y1="470" x2="472.5" y2="478" stroke="#b4bcc4" stroke-width="1" stroke-dasharray="1 1"/>
<line x1="490.5" y1="447" x2="490.5" y2="453" stroke="#b4bcc4" stroke-width="1" stroke-dasharray="1 1"/>
<line x1="490.5" y1="470" x2="490.5" y2="478" stroke="#b4bcc4" stroke-width="1" stroke-dasharray="1 1"/>
<line x1="508.5" y1="447" x2="508.5" y2="453" stroke="#b4bcc4" stroke-width="1" stroke-dasharray="1 1"/>
<line x1="508.5" y1="470" x2="508.5" y2="478" stroke="#b4bcc4" stroke-width="1" stroke-dasharray="1 1"/>
<line x1="526.5" y1="447" x2="526.5" y2="453" stroke="#b4bcc4" stroke-width="1" stroke-dasharray="1 1"/>
<line x1="526.5" y1="470" x2="526.5" y2="478" stroke="#b4bcc4" stroke-width="1" stroke-dasharray="1 1"/>
<line x1="544.5" y1="447" x2="544.5" y2="453" stroke="#b4bcc4" stroke-width="1" stroke-dasharray="1 1"/>
<line x1="544.5" y1="470" x2="544.5" y2="478" stroke="#b4bcc4" stroke-width="1" stroke-dasharray="1 1"/>
<line x1="562.5" y1="447" x2="562.5" y2="453" stroke="#b4bcc4" stroke-width="1" stroke-dasharray="1 1"/>
<line x1="562.5" y1="470" x2="562.5" y2="478" stroke="#b4bcc4" stroke-width="1" stroke-dasharray="1 1"/>
<line x1="580.5" y1="447" x2="580.5" y2="453" stroke="#b4bcc4" stroke-width="1" stroke-dasharray="1 1"/>
<line x1="580.5" y1="470" x2="580.5" y2="478" stroke="#b4bcc4" stroke-width="1" stroke-dasharray="1 1"/>
<line x1="598.5" y1="447" x2="598.5" y2="453" stroke="#b4bcc4" stroke-width="1" stroke-dasharray="1 1"/>
<line x1="598.5" y1="470" x2="598.5" y2="478" stroke="#b4bcc4" stroke-width="1" stroke-dasharray="1 1"/>
<line x1="616.5" y1="447" x2="616.5" y2="453" stroke="#b4bcc4" stroke-width="1" stroke-dasharray="1 1"/>
<line x1="616.5" y1="470" x2="616.5" y2="478" stroke="#b4bcc4" stroke-width="1" stroke-dasharray="1 1"/>
<line x1="634.5" y1="447" x2="634.5" y2="453" stroke="#b4bcc4" stroke-width="1" stroke-dasharray="1 1"/>
<line x1="634.5" y1="470" x2="634.5" y2="478" stroke="#b4bcc4" stroke-width="1" stroke-dasharray="1 1"/>
<line x1="652.5" y1="447" x2="652.5" y2="453" stroke="#b4bcc4" stroke-width="1" stroke-dasharray="1 1"/>
<line x1="652.5" y1="470" x2="652.5" y2="478" stroke="#b4bcc4" stroke-width="1" stroke-dasharray="1 1"/>
<line x1="670.5" y1="447" x2="670.5" y2="453" stroke="#b4bcc4" stroke-width="1" stroke-dasharray="1 1"/>
<line x1="670.5" y1="470" x2="670.5" y2="478" stroke="#b4bcc4" stroke-width="1" stroke-dasharray="1 1"/>
<line x1="688.5" y1="447" x2="688.5" y2="453" stroke="#b4bcc4" stroke-width="1" stroke-dasharray="1 1"/>
<line x1="688.5" y1="470" x2="688.5" y2="478" stroke="#b4bcc4" stroke-width="1" stroke-dasharray="1 1"/>
<line x1="706.5" y1="447" x2="706.5" y2="453" stroke="#b4bcc4" stroke-width="1" stroke-dasharray="1 1"/>
<line x1="706.5" y1="470" x2="706.5" y2="478" stroke="#b4bcc4" stroke-width="1" stroke-dasharray="1 1"/>
<line x1="724.5" y1="447" x2="724.5" y2="453" stroke="#b4bcc4" stroke-width="1" stroke-dasharray="1 1"/>
<line x1="724.5" y1="470" x2="724.5" y2="478" stroke="#b4bcc4" stroke-width="1" stroke-dasharray="1 1"/>
<line x1="742.5" y1="447" x2="742.5" y2="453" stroke="#b4bcc4" stroke-width="1" stroke-dasharray="1 1"/>
<line x1="742.5" y1="470" x2="742.5" y2="478" stroke="#b4bcc4" stroke-width="1" stroke-dasharray="1 1"/>
<line x1="760.5" y1="447" x2="760.5" y2="453" stroke="#b4bcc4" stroke-width="1" stroke-dasharray="1 1"/>
<line x1="760.5" y1="470" x2="760.5" y2="478" stroke="#b4bcc4" stroke-width="1" stroke-dasharray="1 1"/>
<line x1="778.5" y1="447" x2="778.5" y2="453" stroke="#b4bcc4" stroke-width="1" stroke-dasharray="1 1"/>
<line x1="778.5" y1="470" x2="778.5" y2="478" stroke="#b4bcc4" stroke-width="1" stroke-dasharray="1 1"/>
<line x1="796.5" y1="447" x2="796.5" y2="453" stroke="#b4bcc4" stroke-width="1" stroke-dasharray="1 1"/>
<line x1="796.5" y1="470" x2="796.5" y2="478" stroke="#b4bcc4" stroke-width="1" stroke-dasharray="1 1"/>
<line x1="814.5" y1="447" x2="814.5" y2="453" stroke="#b4bcc4" stroke-width="1" stroke-dasharray="1 1"/>
<line x1="814.5" y1="470" x2="814.5" y2="478" stroke="#b4bcc4" stroke-width="1" stroke-dasharray="1 1"/>
<line x1="832.5" y1="447" x2="832.5" y2="453" stroke="#b4bcc4" stroke-width="1" stroke-dasharray="1 1"/>
<line x1="832.5" y1="470" x2="832.5" y2="478" stroke="#b4bcc4" stroke-width="1" stroke-dasharray="1 1"/>
<line x1="850.5" y1="447" x2="850.5" y2="453" stroke="#b4bcc4" stroke-width="1" stroke-dasharray="1 1"/>
<line x1="850.5" y1="470" x2="850.5" y2="478" stroke="#b4bcc4" stroke-width="1" stroke-dasharray="1 1"/>
<line x1="868.5" y1="447" x2="868.5" y2="453" stroke="#b4bcc4" stroke-width="1" stroke-dasharray="1 1"/>
<line x1="868.5" y1="470" x2="868.5" y2="478" stroke="#b4bcc4" stroke-width="1" stroke-dasharray="1 1"/>
<line x1="886.5" y1="447" x2="886.5" y2="453" stroke="#b4bcc4" stroke-width="1" stroke-dasharray="1 1"/>
<line x1="886.5" y1="470" x2="886.5" y2="478" stroke="#b4bcc4" stroke-width="1" stroke-dasharray="1 1"/>
<line x1="904.5" y1="447" x2="904.5" y2="453" stroke="#b4bcc4" stroke-width="1" stroke-dasharray="1 1"/>
<line x1="904.5" y1="470" x2="904.5" y2="478" stroke="#b4bcc4" stroke-width="1" stroke-dasharray="1 1"/>
</svg>
<div class="t" style="right:1589px;top:266.19px;font-size:11px;color:#111;font-weight:normal;">30</div>
<div class="t" style="right:1589px;top:474.19px;font-size:11px;color:#111;font-weight:normal;">30</div>
<div class="t" style="right:1589px;top:295.19px;font-size:11px;color:#111;font-weight:normal;">25</div>
<div class="t" style="right:1589px;top:503.19px;font-size:11px;color:#111;font-weight:normal;">25</div>
<div class="t" style="right:1589px;top:324.19px;font-size:11px;color:#111;font-weight:normal;">20</div>
<div class="t" style="right:1589px;top:532.19px;font-size:11px;color:#111;font-weight:normal;">20</div>
<div class="t" style="right:1589px;top:353.19px;font-size:11px;color:#111;font-weight:normal;">15</div>
<div class="t" style="right:1589px;top:561.19px;font-size:11px;color:#111;font-weight:normal;">15</div>
<div class="t" style="right:1589px;top:382.19px;font-size:11px;color:#111;font-weight:normal;">10</div>
<div class="t" style="right:1589px;top:590.19px;font-size:11px;color:#111;font-weight:normal;">10</div>
<div class="t" style="right:1589px;top:411.19px;font-size:11px;color:#111;font-weight:normal;">5</div>
<div class="t" style="right:1589px;top:619.19px;font-size:11px;color:#111;font-weight:normal;">5</div>
<div class="t" style="right:1589px;top:440.19px;font-size:11px;color:#111;font-weight:normal;">0</div>
<div class="t" style="right:1589px;top:648.19px;font-size:11px;color:#111;font-weight:normal;">0</div>
<div class="t" style="left:344.5px;top:442.5px;width:40px;height:12px;text-align:left;font-size:11px;line-height:12px;color:#111;transform:rotate(-90deg);">1</div>
<div class="t" style="left:362.5px;top:442.5px;width:40px;height:12px;text-align:left;font-size:11px;line-height:12px;color:#111;transform:rotate(-90deg);">2</div>
<div class="t" style="left:380.5px;top:442.5px;width:40px;height:12px;text-align:left;font-size:11px;line-height:12px;color:#111;transform:rotate(-90deg);">3</div>
<div class="t" style="left:398.5px;top:442.5px;width:40px;height:12px;text-align:left;font-size:11px;line-height:12px;color:#111;transform:rotate(-90deg);">4</div>
<div class="t" style="left:416.5px;top:442.5px;width:40px;height:12px;text-align:left;font-size:11px;line-height:12px;color:#111;transform:rotate(-90deg);">5</div>
<div class="t" style="left:434.5px;top:442.5px;width:40px;height:12px;text-align:left;font-size:11px;line-height:12px;color:#111;transform:rotate(-90deg);">6</div>
<div class="t" style="left:452.5px;top:442.5px;width:40px;height:12px;text-align:left;font-size:11px;line-height:12px;color:#111;transform:rotate(-90deg);">7</div>
<div class="t" style="left:470.5px;top:442.5px;width:40px;height:12px;text-align:left;font-size:11px;line-height:12px;color:#111;transform:rotate(-90deg);">8</div>
<div class="t" style="left:488.5px;top:442.5px;width:40px;height:12px;text-align:left;font-size:11px;line-height:12px;color:#111;transform:rotate(-90deg);">9</div>
<div class="t" style="left:506.5px;top:442.5px;width:40px;height:12px;text-align:left;font-size:11px;line-height:12px;color:#111;transform:rotate(-90deg);">10</div>
<div class="t" style="left:524.5px;top:442.5px;width:40px;height:12px;text-align:left;font-size:11px;line-height:12px;color:#111;transform:rotate(-90deg);">11</div>
<div class="t" style="left:542.5px;top:442.5px;width:40px;height:12px;text-align:left;font-size:11px;line-height:12px;color:#111;transform:rotate(-90deg);">12</div>
<div class="t" style="left:560.5px;top:442.5px;width:40px;height:12px;text-align:left;font-size:11px;line-height:12px;color:#111;transform:rotate(-90deg);">13</div>
<div class="t" style="left:578.5px;top:442.5px;width:40px;height:12px;text-align:left;font-size:11px;line-height:12px;color:#111;transform:rotate(-90deg);">14</div>
<div class="t" style="left:596.5px;top:442.5px;width:40px;height:12px;text-align:left;font-size:11px;line-height:12px;color:#111;transform:rotate(-90deg);">15</div>
<div class="t" style="left:614.5px;top:442.5px;width:40px;height:12px;text-align:left;font-size:11px;line-height:12px;color:#111;transform:rotate(-90deg);">16</div>
<div class="t" style="left:632.5px;top:442.5px;width:40px;height:12px;text-align:left;font-size:11px;line-height:12px;color:#111;transform:rotate(-90deg);">17</div>
<div class="t" style="left:650.5px;top:442.5px;width:40px;height:12px;text-align:left;font-size:11px;line-height:12px;color:#111;transform:rotate(-90deg);">18</div>
<div class="t" style="left:668.5px;top:442.5px;width:40px;height:12px;text-align:left;font-size:11px;line-height:12px;color:#111;transform:rotate(-90deg);">19</div>
<div class="t" style="left:686.5px;top:442.5px;width:40px;height:12px;text-align:left;font-size:11px;line-height:12px;color:#111;transform:rotate(-90deg);">20</div>
<div class="t" style="left:704.5px;top:442.5px;width:40px;height:12px;text-align:left;font-size:11px;line-height:12px;color:#111;transform:rotate(-90deg);">21</div>
<div class="t" style="left:722.5px;top:442.5px;width:40px;height:12px;text-align:left;font-size:11px;line-height:12px;color:#111;transform:rotate(-90deg);">22</div>
<div class="t" style="left:740.5px;top:442.5px;width:40px;height:12px;text-align:left;font-size:11px;line-height:12px;color:#111;transform:rotate(-90deg);">23</div>
<div class="t" style="left:758.5px;top:442.5px;width:40px;height:12px;text-align:left;font-size:11px;line-height:12px;color:#111;transform:rotate(-90deg);">24</div>
<div class="t" style="left:776.5px;top:442.5px;width:40px;height:12px;text-align:left;font-size:11px;line-height:12px;color:#111;transform:rotate(-90deg);">25</div>
<div class="t" style="left:794.5px;top:442.5px;width:40px;height:12px;text-align:left;font-size:11px;line-height:12px;color:#111;transform:rotate(-90deg);">26</div>
<div class="t" style="left:812.5px;top:442.5px;width:40px;height:12px;text-align:left;font-size:11px;line-height:12px;color:#111;transform:rotate(-90deg);">27</div>
<div class="t" style="left:830.5px;top:442.5px;width:40px;height:12px;text-align:left;font-size:11px;line-height:12px;color:#111;transform:rotate(-90deg);">28</div>
<div class="t" style="left:848.5px;top:442.5px;width:40px;height:12px;text-align:left;font-size:11px;line-height:12px;color:#111;transform:rotate(-90deg);">29</div>
<div class="t" style="left:866.5px;top:442.5px;width:40px;height:12px;text-align:left;font-size:11px;line-height:12px;color:#111;transform:rotate(-90deg);">30</div>
<div class="t" style="left:884.5px;top:442.5px;width:40px;height:12px;text-align:left;font-size:11px;line-height:12px;color:#111;transform:rotate(-90deg);">31</div>
<div class="t" style="left:270px;top:458px;width:80px;height:12px;text-align:center;font-size:11px;line-height:12px;color:#111;transform:rotate(-90deg);">Energie [kWh]</div>
<div style="position:absolute;left:307px;top:691px;width:627px;height:33px;border:1px solid #c7ccd2;"></div>
<svg style="position:absolute;left:312px;top:696px" width="14" height="14" viewBox="0 0 14 14"><path d="M0 0 H14 L0 14 Z" fill="#d1001a"/><path d="M14 0 V14 H0 Z" fill="#63ae37"/></svg>
<div class="t" style="left:332px;top:696.36px;font-size:10.8px;color:#222;font-weight:normal;">Monatsverbrauch</div>
<div class="t" style="left:332px;top:710.84px;font-size:12px;color:#666;font-weight:bold;">206,86 kWh</div>
<div style="position:absolute;left:424px;top:696px;width:14px;height:14px;background:#d1001a;"></div>
<div class="t" style="left:444.5px;top:696.36px;font-size:10.8px;color:#222;font-weight:normal;">Netzbezug</div>
<div class="t" style="left:444.5px;top:710.84px;font-size:12px;color:#666;font-weight:bold;">95,74 kWh</div>
<div style="position:absolute;left:516px;top:696px;width:14px;height:14px;background:#63ae37;"></div>
<div class="t" style="left:537px;top:696.36px;font-size:10.8px;color:#222;font-weight:normal;">Eigenversorgung</div>
<div class="t" style="left:537px;top:710.84px;font-size:12px;color:#666;font-weight:bold;">111,12 kWh</div>
<svg style="position:absolute;left:626px;top:696px" width="14" height="14" viewBox="0 0 14 14"><path d="M0 0 H14 L0 14 Z" fill="#a2df4b"/><path d="M14 0 V14 H0 Z" fill="#fdd948"/></svg>
<div class="t" style="left:646.5px;top:696.36px;font-size:10.8px;color:#222;font-weight:normal;">Monatsertrag</div>
<div class="t" style="left:646.5px;top:710.84px;font-size:12px;color:#666;font-weight:bold;">488,53 kWh</div>
<div style="position:absolute;left:725px;top:696px;width:14px;height:14px;background:#a2df4b;"></div>
<div class="t" style="left:746px;top:696.36px;font-size:10.8px;color:#222;font-weight:normal;">Eigenverbrauch</div>
<div class="t" style="left:746px;top:710.84px;font-size:12px;color:#666;font-weight:bold;">111,12 kWh</div>
<div style="position:absolute;left:829px;top:696px;width:14px;height:14px;background:#fdd948;"></div>
<div class="t" style="left:849.5px;top:696.36px;font-size:10.8px;color:#222;font-weight:normal;">Netzeinspeisung</div>
<div class="t" style="left:849.5px;top:710.84px;font-size:12px;color:#666;font-weight:bold;">377,41 kWh</div>
<svg style="position:absolute;left:546px;top:745px" width="21" height="17" viewBox="0 0 21 17">
<rect x="1.5" y="1.5" width="18" height="14" rx="5" fill="#c8c8c8"/>
<rect x="0.5" y="0.5" width="18" height="14" rx="5" fill="#f6f6f6" stroke="#8c8c8c"/>
<path d="M11 4 L6.5 7.5 L11 11 Z" fill="#0b4fa8"/></svg>
<div style="position:absolute;left:570px;top:743px;width:105px;height:17px;border:1px solid #8a8a8a;background:#fff;"></div>
<svg style="position:absolute;left:660px;top:748px" width="10" height="7" viewBox="0 0 10 7"><path d="M1 1 L5 5 L9 1" fill="none" stroke="#111" stroke-width="1.8"/></svg>
<svg style="position:absolute;left:678px;top:745px" width="21" height="17" viewBox="0 0 21 17">
<rect x="1.5" y="1.5" width="18" height="14" rx="5" fill="#c8c8c8"/>
<rect x="0.5" y="0.5" width="18" height="14" rx="5" fill="#f6f6f6" stroke="#8c8c8c"/>
<path d="M8 4 L12.5 7.5 L8 11 Z" fill="#0b4fa8"/></svg>
<svg style="position:absolute;left:935px;top:742px" width="17" height="17" viewBox="0 0 17 17">
<path d="M12.57 8.36 L14.40 8.32 L14.40 10.68 L12.57 10.64 L11.89 12.28 L13.22 13.54 L11.54 15.22 L10.28 13.89 L8.64 14.57 L8.68 16.40 L6.32 16.40 L6.36 14.57 L4.72 13.89 L3.46 15.22 L1.78 13.54 L3.11 12.28 L2.43 10.64 L0.60 10.68 L0.60 8.32 L2.43 8.36 L3.11 6.72 L1.78 5.46 L3.46 3.78 L4.72 5.11 L6.36 4.43 L6.32 2.60 L8.68 2.60 L8.64 4.43 L10.28 5.11 L11.54 3.78 L13.22 5.46 L11.89 6.72Z" fill="#ededed" stroke="#c2c2c2" stroke-width="1"/>
<circle cx="7.5" cy="9.5" r="2.6" fill="none" stroke="#c4c4c4" stroke-width="1.4"/>
<path d="M10.5 4.5 L13.5 1 L16.5 4.5 Z" fill="#1864c0"/></svg>
<div style="position:absolute;left:292px;top:775px;width:660px;height:180px;background:#fff;border:1px solid #c4c4c4;border-top-left-radius:9px;border-top-right-radius:9px;border-bottom:3px solid #cfcfcf;"></div>
<div style="position:absolute;left:293px;top:776px;width:658px;height:29px;background:linear-gradient(#fdfdfd,#dadada);border-top-left-radius:8px;border-top-right-radius:8px;border-bottom:1px solid #c4c4c4;"></div>
<svg style="position:absolute;left:301.5px;top:788px" width="8" height="5" viewBox="0 0 8 5"><path d="M0 0 H8 L4 4.5Z" fill="#666"/></svg>
<div class="t" style="left:312.5px;top:784.69px;font-size:11px;color:#666;font-weight:bold;">Bilanz</div>
<svg style="position:absolute;left:314px;top:824px" width="14" height="14" viewBox="0 0 14 14"><path d="M0 0 H14 L0 14 Z" fill="#d1001a"/><path d="M14 0 V14 H0 Z" fill="#63ae37"/></svg>
<div class="t" style="left:335px;top:826.86px;font-size:10.8px;color:#1a1a2a;font-weight:normal;">Monatsverbrauch</div>
<div class="t" style="right:1321px;top:825.84px;font-size:12px;color:#555;font-weight:bold;">206,86 kWh</div>
<div style="position:absolute;left:311px;top:844px;width:291px;height:1px;background:#c8c8c8;"></div>
<div style="position:absolute;left:314px;top:850px;width:14px;height:14px;background:#d1001a;"></div>
<div class="t" style="left:335px;top:852.86px;font-size:10.8px;color:#1a1a2a;font-weight:normal;">Netzbezug</div>
<div class="t" style="right:1321px;top:851.84px;font-size:12px;color:#555;font-weight:bold;">95,74 kWh</div>
<div style="position:absolute;left:311px;top:870px;width:291px;height:1px;background:#c8c8c8;"></div>
<div style="position:absolute;left:314px;top:876px;width:14px;height:14px;background:#63ae37;"></div>
<div class="t" style="left:335px;top:878.86px;font-size:10.8px;color:#1a1a2a;font-weight:normal;">Eigenversorgung</div>
<div class="t" style="right:1321px;top:877.84px;font-size:12px;color:#555;font-weight:bold;">111,12 kWh</div>
<div style="position:absolute;left:311px;top:902px;width:291px;height:2px;background:#bdbdbd;"></div>
<div class="t" style="left:335px;top:916.86px;font-size:10.8px;color:#1a1a2a;font-weight:normal;">Autarkiequote</div>
<div class="t" style="right:1321px;top:915.84px;font-size:12px;color:#555;font-weight:bold;">54 %</div>
<svg style="position:absolute;left:645px;top:824px" width="14" height="14" viewBox="0 0 14 14"><path d="M0 0 H14 L0 14 Z" fill="#a2df4b"/><path d="M14 0 V14 H0 Z" fill="#fdd948"/></svg>
<div class="t" style="left:666px;top:826.86px;font-size:10.8px;color:#1a1a2a;font-weight:normal;">Monatsertrag</div>
<div class="t" style="right:990px;top:825.84px;font-size:12px;color:#555;font-weight:bold;">488,53 kWh</div>
<div style="position:absolute;left:642px;top:844px;width:291px;height:1px;background:#c8c8c8;"></div>
<div style="position:absolute;left:645px;top:850px;width:14px;height:14px;background:#a2df4b;"></div>
<div class="t" style="left:666px;top:852.86px;font-size:10.8px;color:#1a1a2a;font-weight:normal;">Eigenverbrauch</div>
<div class="t" style="right:990px;top:851.84px;font-size:12px;color:#555;font-weight:bold;">111,12 kWh</div>
<div style="position:absolute;left:642px;top:870px;width:291px;height:1px;background:#c8c8c8;"></div>
<div style="position:absolute;left:645px;top:876px;width:14px;height:14px;background:#fdd948;"></div>
<div class="t" style="left:666px;top:878.86px;font-size:10.8px;color:#1a1a2a;font-weight:normal;">Netzeinspeisung</div>
<div class="t" style="right:990px;top:877.84px;font-size:12px;color:#555;font-weight:bold;">377,41 kWh</div>
<div style="position:absolute;left:642px;top:902px;width:291px;height:2px;background:#bdbdbd;"></div>
<div class="t" style="left:666px;top:916.86px;font-size:10.8px;color:#1a1a2a;font-weight:normal;">Eigenverbrauchsquote</div>
<div class="t" style="right:990px;top:915.84px;font-size:12px;color:#555;font-weight:bold;">23 %</div>
<div style="position:absolute;left:0px;top:1028px;width:1920px;height:52px;background:linear-gradient(#ececec 0%,#f6f6f6 40%,#ffffff 75%);border-top:1px solid #b8b8b8;"></div>
<div class="t" style="left:10px;top:1038.69px;font-size:11px;color:#444;font-weight:normal;">© 2023 SMA Solar Technology AG</div>
<div class="t" style="left:186.5px;top:1038.69px;font-size:11px;color:#444;font-weight:normal;">|</div>
<div class="t" style="left:200.5px;top:1038.69px;font-size:11px;color:#444;font-weight:normal;">Startseite</div>
<div class="t" style="left:257.5px;top:1038.69px;font-size:11px;color:#444;font-weight:normal;">|</div>
<div class="t" style="left:271px;top:1038.69px;font-size:11px;color:#444;font-weight:normal;">Information</div>
<div class="t" style="left:339px;top:1038.69px;font-size:11px;color:#444;font-weight:normal;">|</div>
<div class="t" style="left:352.5px;top:1038.69px;font-size:11px;color:#444;font-weight:normal;">Bedienungsanleitungen</div>
<div class="t" style="left:476.5px;top:1038.69px;font-size:11px;color:#444;font-weight:normal;">|</div>
<div class="t" style="left:490px;top:1038.69px;font-size:11px;color:#444;font-weight:normal;">FAQ</div>
<div class="t" style="left:521.5px;top:1038.69px;font-size:11px;color:#444;font-weight:normal;">|</div>
<div class="t" style="left:535px;top:1038.69px;font-size:11px;color:#444;font-weight:normal;">Nutzungsbedingungen</div>
<div class="t" style="left:654px;top:1038.69px;font-size:11px;color:#444;font-weight:normal;">|</div>
<div class="t" style="left:668px;top:1038.69px;font-size:11px;color:#444;font-weight:normal;">Datenschutzerklärung</div>
<div class="t" style="left:785px;top:1038.69px;font-size:11px;color:#444;font-weight:normal;">|</div>
<div class="t" style="left:798px;top:1038.69px;font-size:11px;color:#444;font-weight:normal;">Impressum</div>
</body></html>
